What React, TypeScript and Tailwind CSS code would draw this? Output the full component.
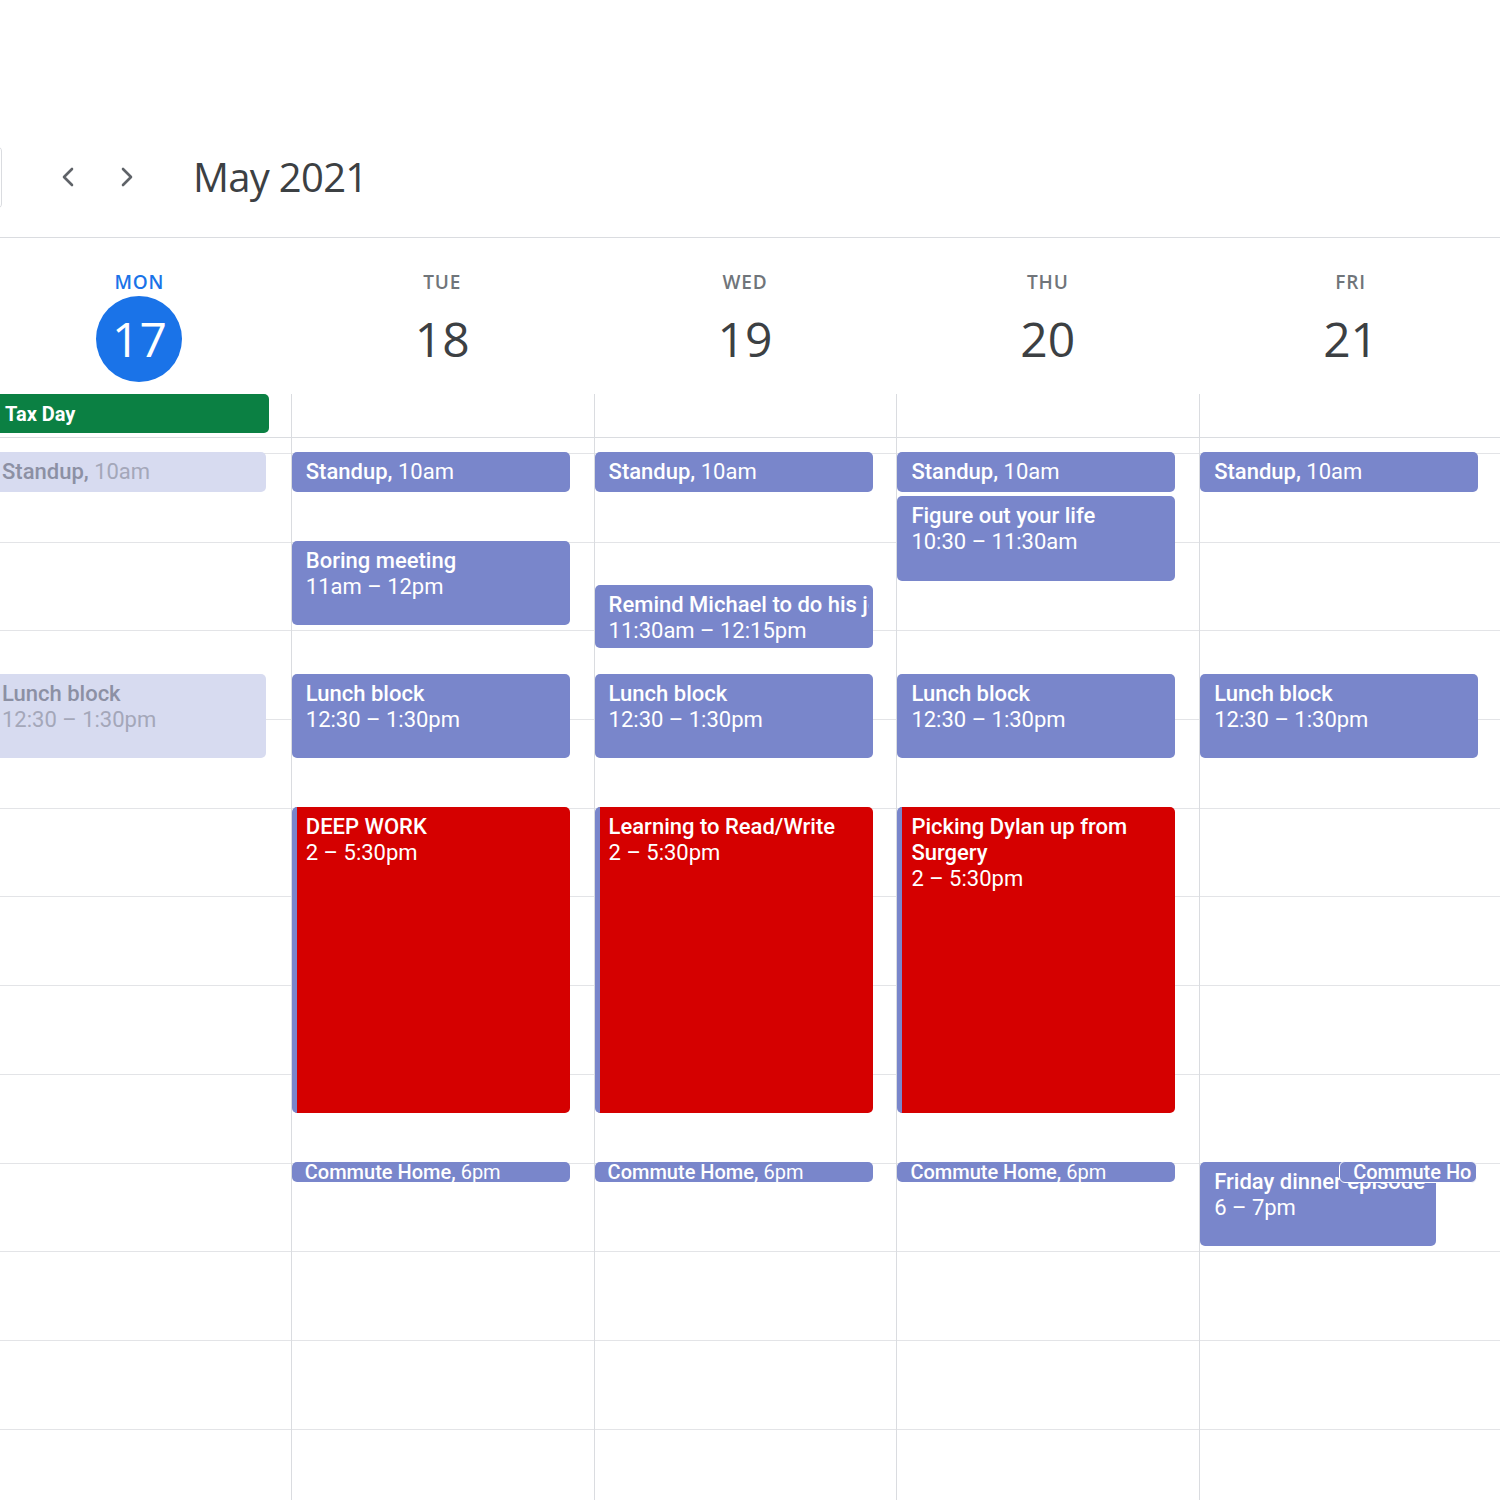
import React from "react";

type Kind = "lav" | "red" | "past" | "commute" | "commuteOver";

type CalEvent = {
  title: string;
  time: string;
  start: number; // hour, e.g. 10.5
  dur: number; // hours
  kind: Kind;
  inline?: boolean;
  left?: number;
  width?: number;
};

const HOUR = 88.7;
const topFor = (h: number) => 14 + (h - 10) * HOUR;
const heightFor = (d: number) => d * HOUR - 4;

const days = [
  { name: "MON", num: "17", today: true },
  { name: "TUE", num: "18" },
  { name: "WED", num: "19" },
  { name: "THU", num: "20" },
  { name: "FRI", num: "21" },
];

const lunch = (kind: Kind): CalEvent => ({
  title: "Lunch block",
  time: "12:30 – 1:30pm",
  start: 12.5,
  dur: 1,
  kind,
});
const standup = (kind: Kind): CalEvent => ({
  title: "Standup",
  time: "10am",
  start: 10,
  dur: 0.5,
  kind,
  inline: true,
});
const commute: CalEvent = {
  title: "Commute Home",
  time: "6pm",
  start: 18,
  dur: 0.25,
  kind: "commute",
  inline: true,
};

const events: CalEvent[][] = [
  [standup("past"), lunch("past")],
  [
    standup("lav"),
    { title: "Boring meeting", time: "11am – 12pm", start: 11, dur: 1, kind: "lav" },
    lunch("lav"),
    { title: "DEEP WORK", time: "2 – 5:30pm", start: 14, dur: 3.5, kind: "red" },
    commute,
  ],
  [
    standup("lav"),
    { title: "Remind Michael to do his job", time: "11:30am – 12:15pm", start: 11.5, dur: 0.75, kind: "lav" },
    lunch("lav"),
    { title: "Learning to Read/Write", time: "2 – 5:30pm", start: 14, dur: 3.5, kind: "red" },
    commute,
  ],
  [
    standup("lav"),
    { title: "Figure out your life", time: "10:30 – 11:30am", start: 10.5, dur: 1, kind: "lav" },
    lunch("lav"),
    { title: "Picking Dylan up from Surgery", time: "2 – 5:30pm", start: 14, dur: 3.5, kind: "red" },
    commute,
  ],
  [
    standup("lav"),
    lunch("lav"),
    { title: "Friday dinner episode", time: "6 – 7pm", start: 18, dur: 1, kind: "lav", width: 236 },
    { title: "Commute Ho", time: "", start: 18, dur: 0.25, kind: "commuteOver", inline: true, left: 139, width: 138 },
  ],
];

function EventChip({ ev }: { ev: CalEvent }) {
  const style: React.CSSProperties = {
    top: topFor(ev.start) - (ev.kind === "commuteOver" ? 1 : 0),
    height:
      ev.kind === "commute" ? 20 : ev.kind === "commuteOver" ? 22 : heightFor(ev.dur),
    left: ev.left ?? 0,
    width: ev.width ?? 278,
  };

  const base = "absolute overflow-hidden rounded-[5px] font-['Roboto',sans-serif]";

  if (ev.kind === "commute" || ev.kind === "commuteOver") {
    return (
      <div
        style={style}
        className={`${base} whitespace-nowrap bg-[#7986cb] pl-[13px] text-[20px] leading-[20px] text-white ${
          ev.kind === "commuteOver" ? "border border-white rounded-[6px]" : ""
        }`}
      >
        <span className="font-medium">
          {ev.title}
          {ev.time && ","}
        </span>
        {ev.time && <span> {ev.time}</span>}
      </div>
    );
  }

  const colors =
    ev.kind === "red"
      ? "bg-[#d50000] border-l-[5px] border-[#7986cb] pl-[9px] text-white"
      : ev.kind === "past"
        ? "bg-[#d7dbf0] pl-[14px] text-[#8c90a4]"
        : "bg-[#7986cb] pl-[14px] text-white";

  return (
    <div style={style} className={`${base} ${colors} pt-[7px] pr-[4px] text-[22px] leading-[26px]`}>
      {ev.inline ? (
        <div className="whitespace-nowrap">
          <span className="font-medium">{ev.title},</span>{" "}
          <span className={ev.kind === "past" ? "text-[#a4a7b9]" : ""}>{ev.time}</span>
        </div>
      ) : (
        <>
          <div className={`font-medium ${ev.kind === "red" ? "" : "whitespace-nowrap overflow-hidden"}`}>{ev.title}</div>
          <div className={`whitespace-nowrap ${ev.kind === "past" ? "text-[#a4a7b9]" : ""}`}>{ev.time}</div>
        </>
      )}
    </div>
  );
}

function Chevron({ dir }: { dir: "left" | "right" }) {
  return (
    <svg width="16" height="22" viewBox="0 0 16 22" fill="none">
      <path
        d={dir === "left" ? "M12 3 L4 11 L12 19" : "M4 3 L12 11 L4 19"}
        stroke="#5f6368"
        strokeWidth="2.6"
        strokeLinecap="round"
        strokeLinejoin="round"
      />
    </svg>
  );
}

export default function App() {
  return (
    <div className="h-[1500px] w-[1500px] overflow-hidden bg-white">
      {/* toolbar */}
      <div className="border-b border-[#dadce0] pt-[145px] pb-[28px]">
        <div className="flex h-[64px] items-center">
          <div className="-ml-[80px] h-[63px] w-[82px] rounded-[5px] border border-[#dadce0]" />
          <button type="button" className="ml-[46px] flex h-[40px] w-[40px] items-center justify-center">
            <Chevron dir="left" />
          </button>
          <button type="button" className="ml-[19px] flex h-[40px] w-[40px] items-center justify-center">
            <Chevron dir="right" />
          </button>
          <h1 className="ml-[46px] font-['Open_Sans',sans-serif] text-[40px] leading-none tracking-[-0.7px] text-[#3c4043]">
            May 2021
          </h1>
        </div>
      </div>

      <div className="-ml-[12px] w-[1514px]">
        {/* day headers */}
        <div className="grid h-[156px] grid-cols-5">
          {days.map((d) => (
            <div key={d.name} className="flex flex-col items-center pt-[32px]">
              <div
                className={`font-['Open_Sans',sans-serif] text-[19px] font-semibold leading-[24px] tracking-[0.8px] ${
                  d.today ? "text-[#1a73e8]" : "text-[#70757a]"
                }`}
              >
                {d.name}
              </div>
              <div
                className={`mt-[2px] flex h-[86px] w-[86px] items-center justify-center rounded-full font-['Open_Sans',sans-serif] text-[48px] leading-none ${
                  d.today ? "bg-[#1a73e8] text-white" : "text-[#3c4043]"
                }`}
              >
                {d.num}
              </div>
            </div>
          ))}
        </div>

        {/* all-day row */}
        <div className="grid h-[44px] grid-cols-5 border-b border-[#dadce0]">
          {days.map((d, i) => (
            <div key={d.name} className={i > 0 ? "border-l border-[#dadce0]" : ""}>
              {i === 0 && (
                <div className="flex h-[39px] w-[281px] items-center rounded-[5px] bg-[#0b8043] pl-[17px] font-['Roboto',sans-serif] text-[20px] font-bold text-white">
                  Tax Day
                </div>
              )}
            </div>
          ))}
        </div>

        {/* time grid */}
        <div className="grid grid-cols-5">
          {days.map((d, i) => (
            <div key={d.name} className={`relative ${i > 0 ? "border-l border-[#dadce0]" : ""}`}>
              <div className="h-[15px]" />
              {Array.from({ length: 12 }).map((_, k) => (
                <div key={k} className="h-[88.7px] border-t border-[#e3e4e7]" />
              ))}
              {events[i].map((ev, j) => (
                <EventChip key={j} ev={ev} />
              ))}
            </div>
          ))}
        </div>
      </div>
    </div>
  );
}
